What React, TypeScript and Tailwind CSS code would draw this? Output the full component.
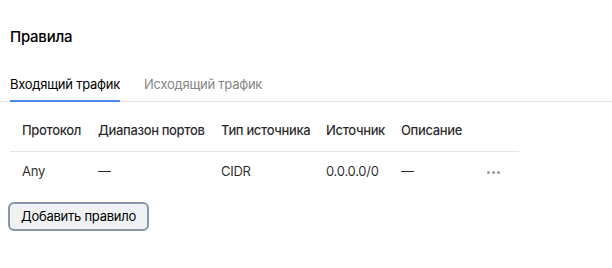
import React from "react";

const cols = "grid grid-cols-[76px_123px_105px_75px_86px_44px]";

export default function App() {
  return (
    <div className="w-[612px] h-[268px] bg-white text-[13px] tracking-[-0.25px] text-[#000000d9] font-['Inter','Noto_Sans',sans-serif] pt-[28px]">
      <div className="pl-[10px] text-[15px] font-medium leading-[18px] text-black">Правила</div>
      <div className="mt-[29px] flex border-b border-[#e5e5e5] pl-[10px]">
        <div className="pb-[7px] border-b-2 border-[#5283f4] -mb-px leading-[18px] text-black">Входящий трафик</div>
        <div className="ml-[24px] pb-[7px] leading-[18px] text-[#858585]">Исходящий трафик</div>
      </div>
      <div className="ml-[10px] mt-[19px] w-[509px]">
        <div className={`${cols} border-b border-[#e5e5e5] h-[31px] items-start font-medium tracking-[-0.35px]`}>
          <div className="px-3 whitespace-nowrap leading-[18px]">Протокол</div>
          <div className="px-3 whitespace-nowrap leading-[18px]">Диапазон портов</div>
          <div className="px-3 whitespace-nowrap leading-[18px]">Тип источника</div>
          <div className="px-3 whitespace-nowrap leading-[18px]">Источник</div>
          <div className="px-3 whitespace-nowrap leading-[18px]">Описание</div>
          <div />
        </div>
        <div className={`${cols} h-[40px] items-center`}>
          <div className="px-3">Any</div>
          <div className="px-3">—</div>
          <div className="px-3">CIDR</div>
          <div className="px-3">0.0.0.0/0</div>
          <div className="px-3">—</div>
          <div className="px-3 flex items-center gap-[2px]">
            <span className="w-[3px] h-[3px] rounded-full bg-[#9a9a9a]" />
            <span className="w-[3px] h-[3px] rounded-full bg-[#9a9a9a]" />
            <span className="w-[3px] h-[3px] rounded-full bg-[#9a9a9a]" />
          </div>
        </div>
      </div>
      <div className="pl-[8px] mt-[10px]">
        <button className="h-[29px] px-[11px] rounded-[6px] border-2 border-[#8696a7] bg-[#eff1f3] text-[13px] text-black leading-none">
          Добавить правило
        </button>
      </div>
    </div>
  );
}
